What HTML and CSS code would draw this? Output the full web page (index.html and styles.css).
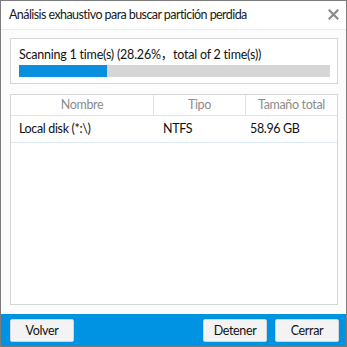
FILE: index.html
```html
<!DOCTYPE html>
<html>
<head>
<meta charset="utf-8">
<link rel="stylesheet" href="styles.css">
</head>
<body>
<div class="window">
  <div class="titlebar">
    <span class="title">Análisis exhaustivo para buscar partición perdida</span>
    <svg class="close" width="11" height="11" viewBox="0 0 11 11"><path d="M1.5 1.5L9.5 9.5M9.5 1.5L1.5 9.5" stroke="#8a8a8a" stroke-width="2.2" stroke-linecap="square"/></svg>
  </div>
  <div class="content">
    <div class="progress-box">
      <div class="status">Scanning 1 time(s) (28.26%，total of 2 time(s))</div>
      <div class="bar"><div class="fill" style="width:28.26%"></div></div>
    </div>
    <div class="table">
      <div class="row head">
        <div class="c1">Nombre</div>
        <div class="c2">Tipo</div>
        <div class="c3">Tamaño total</div>
      </div>
      <div class="row item">
        <div class="c1">Local disk (*:\)</div>
        <div class="c2">NTFS</div>
        <div class="c3">58.96 GB</div>
      </div>
    </div>
  </div>
  <div class="footer">
    <button class="btn">Volver</button>
    <div class="spacer"></div>
    <button class="btn">Detener</button>
    <button class="btn">Cerrar</button>
  </div>
</div>
</body>
</html>
```
FILE: styles.css
```css
* { box-sizing: border-box; }
html, body { margin: 0; padding: 0; background: #fff; }
body { font-family: Lato, "Noto Sans CJK SC", sans-serif; font-size: 12.5px; letter-spacing: -0.35px; color: #111; }
.window {
  width: 347px; height: 347px;
  border: 1px solid #7c7c7c;
  display: flex; flex-direction: column;
  background: #fff;
}
.titlebar {
  height: 29px;
  border-bottom: 1px solid #ececec;
  display: flex; align-items: center;
  padding: 0 7px 1px 8px;
}
.title { flex: 1; line-height: 16px; color: #1a1a1a; letter-spacing: -0.57px; }
.close { display: block; }
.content {
  flex: 1;
  background: #fcfcfc;
  padding: 8px 8px 9px 9px;
  display: flex; flex-direction: column;
}
.progress-box {
  border: 1px solid #d6d6d6;
  background: #fff;
  padding: 8px 7px 6px 8px;
}
.status { line-height: 16px; height: 16px; color: #111; white-space: nowrap; letter-spacing: -0.22px; }
.bar { margin-top: 2px; height: 12px; background: #d6d6d6; }
.fill { height: 12px; background: #0a8ee0; }
.table {
  margin-top: 10px;
  flex: 1;
  border: 1px solid #d6d6d6;
  background: #fff;
}
.row { display: flex; }
.head {
  height: 21px;
  border-bottom: 1px solid #e2e2e2;
  color: #8c8c8c;
  line-height: 20px;
  text-align: center;
}
.head .c1 { border-right: 1px solid #e2e2e2; }
.head .c2 { border-right: 1px solid #e2e2e2; }
.c1 { width: 143px; }
.c2 { width: 92px; }
.c3 { flex: 1; }
.item {
  height: 27px;
  border-bottom: 1px solid #dbe9f6;
  line-height: 26px;
  color: #111;
}
.item .c1 { padding-left: 8px; }
.item .c2 { padding-left: 9px; }
.item .c3 { padding-left: 4px; }
.footer {
  height: 32px;
  background: #0092e3;
  display: flex;
  padding: 5px 7px 0 9px;
  gap: 8px;
  align-items: flex-start;
}
.spacer { flex: 1; }
.btn {
  width: 64px; height: 23px;
  background: #f3f3f3;
  border: 1px solid #d4d4d4;
  border-radius: 2px;
  font-family: Lato, sans-serif;
  font-size: 12.5px;
  letter-spacing: -0.35px;
  color: #111;
  padding: 0;
  line-height: 20px;
}
```
